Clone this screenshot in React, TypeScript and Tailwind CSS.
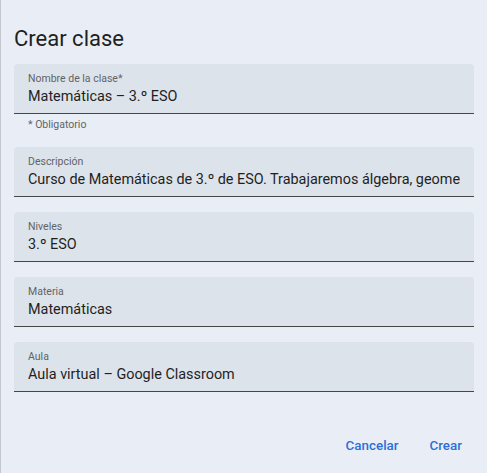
import React from 'react';

interface FieldProps {
  label: string;
  value: string;
}

const Field: React.FC<FieldProps> = ({ label, value }) => (
  <div className="rounded-t-[4px] bg-[#dde3ea] border-b border-[#444746] px-[14px] pt-[8px] pb-[6px]">
    <div className="text-[10.5px] leading-[13px] text-[#5f6368]">{label}</div>
    <div className="mt-[2px] overflow-hidden whitespace-nowrap text-[14.4px] leading-[20px] text-[#1f1f1f]">
      {value}
    </div>
  </div>
);

const fields: FieldProps[] = [
  {
    label: 'Descripción',
    value: 'Curso de Matemáticas de 3.º de ESO. Trabajaremos álgebra, geometría y estadística.'
  },
  { label: 'Niveles', value: '3.º ESO' },
  { label: 'Materia', value: 'Matemáticas' },
  { label: 'Aula', value: 'Aula virtual – Google Classroom' }
];

export default function App() {
  return (
    <div
      className="w-[487px] h-[473px] overflow-hidden bg-[#e9eef6] border-l border-[#c4c8ce] pl-[13px] pr-[13px]"
      style={{ fontFamily: 'Roboto, "Liberation Sans", sans-serif' }}
    >
      <h2 className="pt-[25px] text-[22px] leading-[28px] font-normal text-[#1f1f1f]">Crear clase</h2>

      <div className="mt-[11px]">
        <Field label="Nombre de la clase*" value="Matemáticas – 3.º ESO" />
        <div className="mt-[4px] mb-[16px] px-[14px] text-[10.5px] leading-[13px] text-[#5f6368]">* Obligatorio</div>
      </div>

      <div className="flex flex-col gap-[15px]">
        {fields.map(f => (
          <Field key={f.label} label={f.label} value={f.value} />
        ))}
      </div>

      <div className="mt-[36px] flex justify-end gap-[15px] pr-[4px]">
        <button type="button" className="h-9 px-2 text-[13.4px] leading-[20px] font-medium text-[#2d6ed6]">
          Cancelar
        </button>
        <button type="button" className="h-9 px-2 text-[13.4px] leading-[20px] font-medium text-[#2d6ed6]">
          Crear
        </button>
      </div>
    </div>
  );
}
